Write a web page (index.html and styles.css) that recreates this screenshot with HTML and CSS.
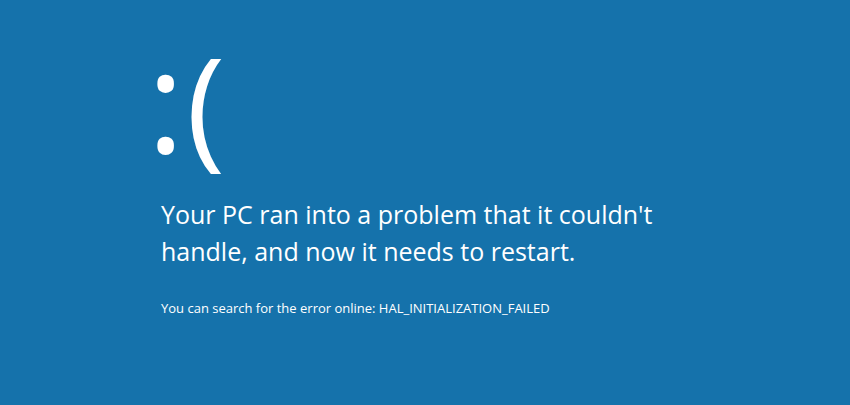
FILE: index.html
```html
<!DOCTYPE html>
<html>
<head>
<meta charset="utf-8">
<link rel="stylesheet" href="styles.css">
</head>
<body>
<main class="screen">
  <div class="face">:<span class="mouth">(</span></div>
  <p class="message">Your PC ran into a problem that it couldn't handle, and now it needs to restart.</p>
  <p class="hint">You can search for the error online: HAL_INITIALIZATION_FAILED</p>
</main>
</body>
</html>
```
FILE: styles.css
```css
html, body {
  margin: 0;
  padding: 0;
  height: 100%;
}
body {
  background: #1572ab;
  color: #ffffff;
  font-family: "Open Sans", "Noto Sans", sans-serif;
  overflow: hidden;
}
.screen {
  display: flex;
  flex-direction: column;
  padding: 23px 0 0 152px;
}
.face {
  font-size: 142px;
  font-weight: 400;
  line-height: 150px;
  margin: 0 0 0 -5px;
}
.mouth {
  font-size: 132px;
  line-height: 1;
  margin-left: 2px;
}
.message {
  font-size: 25px;
  line-height: 37px;
  margin: 23px 0 0 9px;
  width: 520px;
}
.hint {
  font-size: 13px;
  line-height: 18px;
  margin: 29px 0 0 9px;
}
```
